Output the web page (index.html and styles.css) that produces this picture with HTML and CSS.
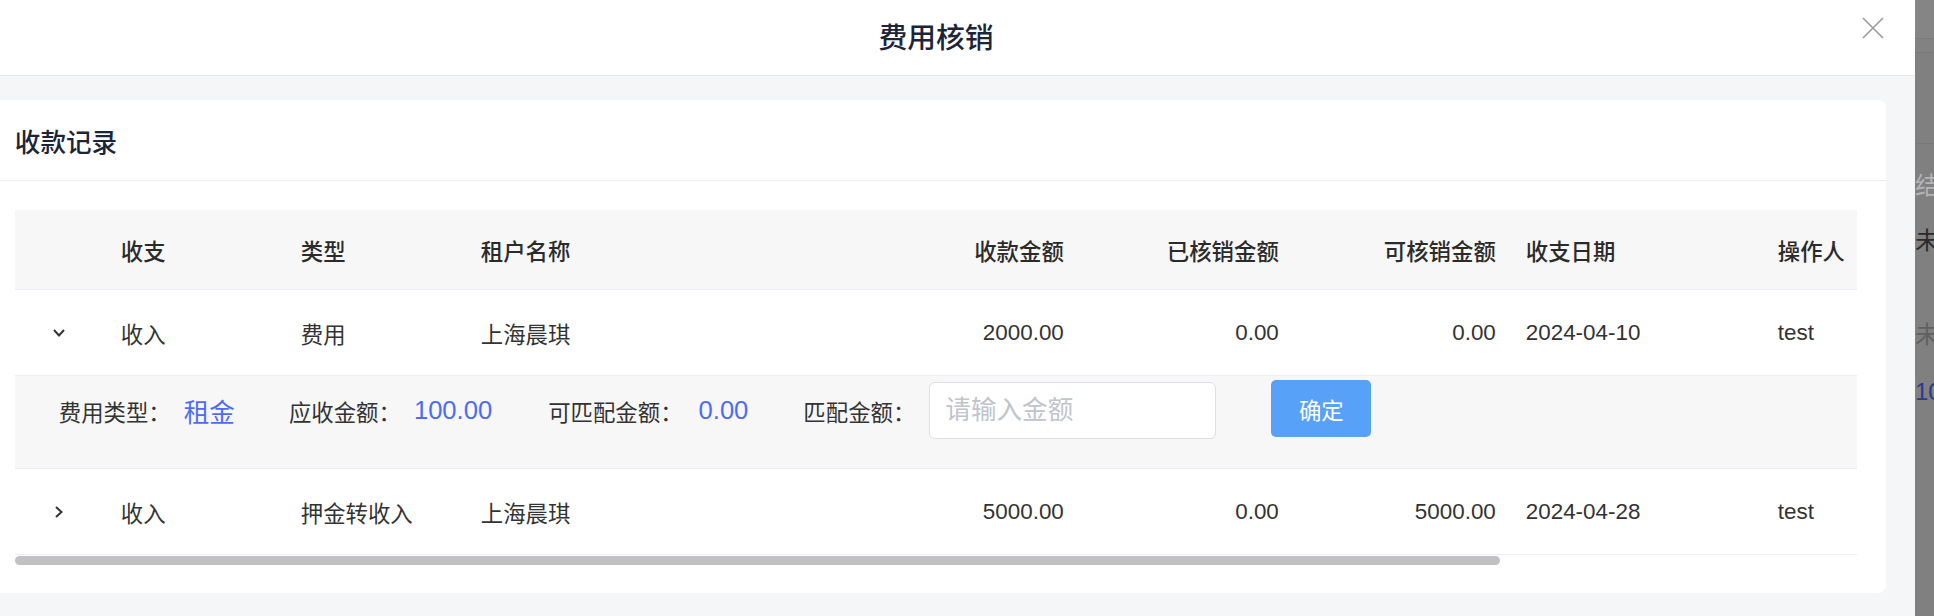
FILE: index.html
```html
<!DOCTYPE html>
<html lang="zh-CN">
<head>
<meta charset="utf-8">
<title>费用核销</title>
<link rel="stylesheet" href="styles.css">
</head>
<body>
<div class="screen">
  <div class="dialog">
    <div class="dialog-header">
      <span class="dialog-title">费用核销</span>
      <button class="close-btn" aria-label="关闭">
        <svg width="22" height="22" viewBox="0 0 22 22"><path d="M1 1 L21 21 M21 1 L1 21" stroke="#9a9a9a" stroke-width="1.6" fill="none"/></svg>
      </button>
    </div>
    <div class="dialog-body">
      <div class="card">
        <div class="card-header">收款记录</div>
        <div class="card-content">
          <div class="table-wrap">
            <div class="table">
              <div class="row head">
                <div class="cell"></div>
                <div class="cell">收支</div>
                <div class="cell">类型</div>
                <div class="cell">租户名称</div>
                <div class="cell right">收款金额</div>
                <div class="cell right">已核销金额</div>
                <div class="cell right">可核销金额</div>
                <div class="cell">收支日期</div>
                <div class="cell">操作人</div>
              </div>
              <div class="row">
                <div class="cell expand">
                  <svg width="12" height="8" viewBox="0 0 12 8"><path d="M1 1 L6 6.5 L11 1" stroke="#333" stroke-width="2" fill="none"/></svg>
                </div>
                <div class="cell">收入</div>
                <div class="cell">费用</div>
                <div class="cell">上海晨琪</div>
                <div class="cell right">2000.00</div>
                <div class="cell right">0.00</div>
                <div class="cell right">0.00</div>
                <div class="cell">2024-04-10</div>
                <div class="cell">test</div>
              </div>
              <div class="expand-row">
                <div class="item"><span class="label">费用类型：</span><span class="value">租金</span></div>
                <div class="item item-wide"><span class="label">应收金额：</span><span class="value">100.00</span></div>
                <div class="item item-match"><span class="label">可匹配金额：</span><span class="value">0.00</span></div>
                <div class="item"><span class="label">匹配金额：</span><input class="amount-input" type="text" placeholder="请输入金额"></div>
                <button class="confirm-btn">确定</button>
              </div>
              <div class="row">
                <div class="cell expand">
                  <svg width="8" height="12" viewBox="0 0 8 12"><path d="M1 1 L6.5 6 L1 11" stroke="#333" stroke-width="2" fill="none"/></svg>
                </div>
                <div class="cell">收入</div>
                <div class="cell">押金转收入</div>
                <div class="cell">上海晨琪</div>
                <div class="cell right">5000.00</div>
                <div class="cell right">0.00</div>
                <div class="cell right">5000.00</div>
                <div class="cell">2024-04-28</div>
                <div class="cell">test</div>
              </div>
            </div>
          </div>
          <div class="scrollbar"><div class="thumb"></div></div>
        </div>
      </div>
    </div>
  </div>
  <div class="backdrop">
    <div class="bd-top"></div>
    <div class="bd-sub"></div>
    <div class="bd-block"></div>
    <div class="bd-text t1">结</div>
    <div class="bd-text t2">未</div>
    <div class="bd-text t3">未</div>
    <div class="bd-text t4">10</div>
  </div>
</div>
</body>
</html>
```

FILE: styles.css
```css
* { box-sizing: border-box; }
html, body {
  margin: 0;
  padding: 0;
  background: #f5f6f7;
  font-family: "Liberation Sans", "Noto Sans CJK SC", sans-serif;
}
.screen {
  display: flex;
  width: 1934px;
  height: 616px;
  overflow: hidden;
}
.dialog {
  flex: 0 0 1958px;
  width: 1958px;
  min-width: 0;
  margin-left: -43px;
  background: #f5f6f7;
  display: flex;
  flex-direction: column;
  overflow: hidden;
}
.dialog-header {
  position: relative;
  height: 76px;
  background: #fff;
  border-bottom: 1px solid #e8e8e8;
  display: flex;
  align-items: center;
  justify-content: center;
  padding-bottom: 18px;
}
.dialog-title {
  font-size: 28.8px;
  font-weight: 500;
  color: #1c2538;
  line-height: 40px;
  margin-top: 18px;
}
.close-btn {
  position: absolute;
  right: 31px;
  top: 17px;
  width: 22px;
  height: 22px;
  padding: 0;
  border: 0;
  background: transparent;
  display: flex;
}
.dialog-body {
  padding: 24px 29px 0 29px;
  flex: 1;
  min-width: 0;
}
.card {
  background: #fff;
  border-radius: 8px;
  height: 493px;
  overflow: hidden;
}
.card-header {
  height: 81px;
  border-bottom: 1px solid #ebeef5;
  padding-left: 28.8px;
  display: flex;
  align-items: center;
  font-size: 25.6px;
  color: #1c2538;
  font-weight: 500;
}
.card-content {
  padding: 29px 28.8px 0 28.8px;
}
.table-wrap {
  overflow: hidden;
  width: 100%;
}
.table {
  width: 1948px;
  font-size: 22.4px;
  color: #333;
}
.row {
  display: grid;
  grid-template-columns: 91px 180px 180px 397px 216px 215px 217px 252px 200px;
  height: 86px;
  border-bottom: 1px solid #ebeef5;
  align-items: center;
}
.row.head {
  height: 80px;
  background: #f7f7f7;
  font-weight: 500;
  color: #2b2b2b;
}
.cell {
  padding: 0 15px;
  white-space: nowrap;
}
.cell.right { text-align: right; }
.cell.expand {
  display: flex;
  justify-content: center;
  padding: 0 2px 0 0;
}
.expand-row {
  height: 93px;
  background: #f7f7f7;
  border-bottom: 1px solid #ebeef5;
  padding: 6px 0 29px 44px;
  display: flex;
  align-items: center;
}
.item {
  display: flex;
  align-items: center;
  margin-right: 54px;
}
.item-wide { margin-right: 56px; }
.item-match { margin-right: 55px; }
.item-match .value { margin-left: 16px; }
.label {
  font-size: 22.4px;
  color: #333;
  white-space: nowrap;
}
.value {
  font-size: 25.6px;
  color: #4d6cf5;
  margin-left: 13px;
  white-space: nowrap;
}
.amount-input {
  margin-left: 14px;
  width: 287px;
  height: 57px;
  border: 1px solid #dcdfe6;
  border-radius: 6px;
  background: #fff;
  padding: 0 15px;
  font-family: "Liberation Sans", "Noto Sans CJK SC", sans-serif;
  font-size: 25.6px;
  color: #333;
  outline: none;
}
.amount-input::placeholder { color: #c0c4cc; }
.confirm-btn {
  width: 100px;
  height: 57px;
  margin-top: -4px;
  margin-left: 1px;
  border: 0;
  border-radius: 5px;
  background: #57a1f8;
  color: #fff;
  font-family: "Liberation Sans", "Noto Sans CJK SC", sans-serif;
  font-size: 22.4px;
}
.scrollbar {
  height: 10px;
  padding-top: 1px;
}
.thumb {
  width: 1485px;
  height: 9px;
  border-radius: 5px;
  background: #c1c1c1;
}
.backdrop {
  flex: 1;
  background: #808080;
  position: relative;
  overflow: hidden;
}
.bd-top {
  height: 39px;
  background: #858585;
  border-bottom: 1px solid #7a7a7a;
}
.bd-sub {
  height: 14px;
  background: #828282;
  border-bottom: 1px solid #787878;
}
.bd-block {
  height: 91px;
  border-bottom: 1px solid #787878;
}
.bd-text {
  position: absolute;
  left: 0;
  font-size: 24px;
  line-height: 30px;
  white-space: nowrap;
}
.t1 { top: 171px; color: #b4b4b4; }
.t2 { top: 226px; color: #2a2a2a; }
.t3 { top: 320px; color: #606060; }
.t4 { top: 377px; color: #2b3a8c; }
```
